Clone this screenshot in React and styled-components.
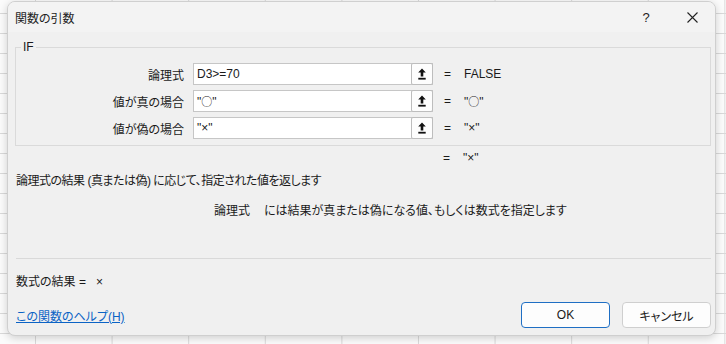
import styled, { createGlobalStyle } from "styled-components";

const GlobalStyle = createGlobalStyle`
  html, body {
    margin: 0;
    padding: 0;
  }
  body {
    width: 726px;
    height: 344px;
    overflow: hidden;
    background-color: #fbfbfb;
    background-image:
      linear-gradient(to right, #d9d9d9 1px, transparent 1px),
      linear-gradient(to bottom, #d9d9d9 1px, transparent 1px);
    background-size: 76.6px 20px, 76.6px 20px;
    background-position: 35px 13px;
    font-family: "Liberation Sans", "Noto Sans CJK JP", sans-serif;
    font-feature-settings: "palt";
    font-size: 12px;
    color: #1a1a1a;
  }
`;

const Dialog = styled.div`
  box-sizing: border-box;
  margin: 1px 0 0 7px;
  width: 709px;
  height: 335px;
  background: #f0f0f0;
  border: 1px solid #cfcfcf;
  border-radius: 8px;
  box-shadow: 0 2px 8px rgba(0, 0, 0, 0.18);
  display: flex;
  flex-direction: column;
  overflow: hidden;
`;

const TitleBar = styled.div`
  height: 30px;
  display: flex;
  align-items: center;
  padding-left: 7px;
  background: #f3f3f3;
`;

const Title = styled.div`
  flex: 1;
  font-size: 12px;
  color: #222;
`;

const TitleButton = styled.div`
  width: 46px;
  height: 30px;
  display: flex;
  align-items: center;
  justify-content: center;
  font-size: 13px;
  color: #222;
`;

const Body = styled.div`
  padding: 0 4px 0 7px;
  display: flex;
  flex-direction: column;
  flex: 1;
`;

const Group = styled.fieldset`
  margin: 7px 0 0 0;
  padding: 8px 0 6px 0;
  border: 1px solid #dadada;
  display: flex;
  flex-direction: column;
  gap: 5px;
`;

const Legend = styled.legend`
  margin-left: 5px;
  padding: 0 2px;
  line-height: 16px;
  font-size: 12px;
`;

const ArgRow = styled.div`
  display: flex;
  align-items: center;
  height: 22px;
`;

const ArgLabel = styled.div`
  width: 168px;
  margin-right: 9px;
  text-align: right;
`;

const InputBox = styled.div`
  box-sizing: border-box;
  width: 240px;
  height: 22px;
  background: #fff;
  border: 1px solid #c6c6c6;
  display: flex;
  align-items: center;
`;

const InputText = styled.div`
  flex: 1;
  padding-left: 3px;
  font-size: 12px;
  white-space: pre;
`;

const Circle = styled.span`
  font-family: "Noto Sans CJK JP", sans-serif;
  font-feature-settings: normal;
  font-size: 11px;
`;

const RefButton = styled.div`
  box-sizing: border-box;
  width: 22px;
  height: 22px;
  margin-right: -1px;
  border: 1px solid #bdbdbd;
  border-radius: 2px;
  background: #fdfdfd;
  display: flex;
  align-items: center;
  justify-content: center;
`;

const Eq = styled.div`
  width: 20px;
  margin-left: ${({ $offset }) => $offset ?? 11}px;
`;

const Value = styled.div`
  white-space: pre;
`;

const ResultLine = styled.div`
  display: flex;
  height: 16px;
  margin-top: 5px;
  padding-left: ${({ $indent }) => $indent}px;
`;

const Description = styled.div`
  margin-top: 6px;
  padding-left: 1px;
  line-height: 16px;
  letter-spacing: -0.5px;
`;

const ArgHelp = styled.div`
  margin-top: 14px;
  padding-left: 199px;
  line-height: 16px;
`;

const ArgName = styled.span`
  margin-right: 14px;
`;

const Separator = styled.div`
  margin: 39px 0 0 1px;
  border-top: 1px solid #d9d9d9;
`;

const FormulaResult = styled.div`
  margin-top: 15px;
  padding-left: 1px;
  line-height: 16px;
  white-space: pre;
`;

const Footer = styled.div`
  display: flex;
  align-items: center;
  margin-top: 12px;
  padding-left: 1px;
`;

const HelpLink = styled.a`
  flex: 1;
  color: #0b63c5;
  text-decoration: underline;
  cursor: pointer;
`;

const Button = styled.button`
  box-sizing: border-box;
  width: 89px;
  height: 26px;
  margin-left: ${({ $gap }) => $gap || 0}px;
  background: #fdfdfd;
  border: 1px solid ${({ $primary }) => ($primary ? "#1f6fc4" : "#cfcfcf")};
  border-radius: 4px;
  font-family: "Liberation Sans", "Noto Sans CJK JP", sans-serif;
  font-feature-settings: "palt";
  font-size: 12px;
  color: #1a1a1a;
`;

const RefIcon = () => (
  <svg width="8" height="12" viewBox="0 0 8 12">
    <path d="M4 0.5 L7.8 4.6 H5.3 V8.6 H2.7 V4.6 H0.2 Z" fill="#111" />
    <rect x="0.3" y="9.8" width="7.4" height="1.8" fill="#111" />
  </svg>
);

const CloseIcon = () => (
  <svg width="11" height="11" viewBox="0 0 11 11">
    <path d="M0.5 0.5 L10.5 10.5 M10.5 0.5 L0.5 10.5" stroke="#222" strokeWidth="1.1" />
  </svg>
);

const quoted = (v) => (
  <>
    "{v === "○" ? <Circle>○</Circle> : v}"
  </>
);

const args = [
  { label: "論理式", value: "D3>=70", result: "FALSE" },
  { label: "値が真の場合", value: quoted("○"), result: quoted("○") },
  { label: "値が偽の場合", value: quoted("×"), result: quoted("×") },
];

export default function App() {
  return (
    <>
      <GlobalStyle />
      <Dialog>
        <TitleBar>
          <Title>関数の引数</Title>
          <TitleButton>?</TitleButton>
          <TitleButton>
            <CloseIcon />
          </TitleButton>
        </TitleBar>
        <Body>
          <Group>
            <Legend>IF</Legend>
            {args.map((a) => (
              <ArgRow key={a.label}>
                <ArgLabel>{a.label}</ArgLabel>
                <InputBox>
                  <InputText>{a.value}</InputText>
                  <RefButton>
                    <RefIcon />
                  </RefButton>
                </InputBox>
                <Eq>=</Eq>
                <Value>{a.result}</Value>
              </ArgRow>
            ))}
          </Group>
          <ResultLine $indent={428}>
            <Eq $offset={0}>=</Eq>
            <Value>"×"</Value>
          </ResultLine>
          <Description>論理式の結果 (真または偽) に応じて、指定された値を返します</Description>
          <ArgHelp>
            <ArgName>論理式</ArgName>
            には結果が真または偽になる値、もしくは数式を指定します
          </ArgHelp>
          <Separator />
          <FormulaResult>数式の結果 =   ×</FormulaResult>
          <Footer>
            <HelpLink>この関数のヘルプ(H)</HelpLink>
            <Button $primary>OK</Button>
            <Button $gap={12}>キャンセル</Button>
          </Footer>
        </Body>
      </Dialog>
    </>
  );
}
